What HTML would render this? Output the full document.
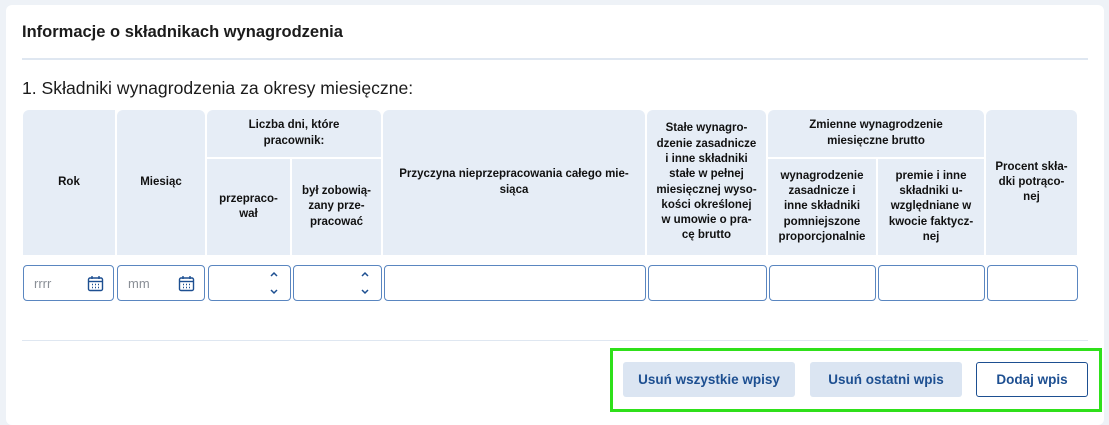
<!DOCTYPE html>
<html><head><meta charset="utf-8"><style>
*{box-sizing:border-box;margin:0;padding:0}
body{width:1109px;height:413px;background:#eef2f7;font-family:"Liberation Sans",sans-serif;position:relative;overflow:hidden;color:#1b1b1b}
.card{position:absolute;left:6px;top:5px;width:1098px;height:420px;background:#fff;border-radius:6px}
.a{position:absolute}
.h{position:absolute;background:#e6edf6;display:flex;align-items:center;justify-content:center;text-align:center;font-weight:bold;font-size:11.5px;line-height:15.3px;color:#111;padding:0 4px}
.in{position:absolute;top:265px;height:36px;border:1.5px solid #5a86c0;border-radius:4px;background:#fff}
.btn{position:absolute;top:362px;height:35px;border-radius:3px;display:flex;align-items:center;justify-content:center;font-weight:bold;font-size:13.5px;color:#1d4f91;background:#dbe5f2}
.ph{position:absolute;top:10px;left:10px;font-size:13px;color:#8a8f96}
</style></head><body>
<div class="card"></div>
<div class="a" style="left:22px;top:23px;font-size:16.5px;font-weight:bold;">Informacje o składnikach wynagrodzenia</div>
<div class="a" style="left:22px;top:58px;width:1066px;height:2px;background:#dfe7f1"></div>
<div class="a" style="left:22px;top:78px;font-size:17.6px;">1. Składniki wynagrodzenia za okresy miesięczne:</div>

<div class="h" style="left:23px;top:110px;width:92px;height:145px;border-top-left-radius:6px">Rok</div>
<div class="h" style="left:117px;top:110px;width:88px;height:145px;border-top-left-radius:6px;border-top-right-radius:6px">Miesiąc</div>
<div class="h" style="left:207px;top:110px;width:174px;height:47px;border-top-left-radius:6px;border-top-right-radius:6px">Liczba dni, które<br>pracownik:</div>
<div class="h" style="left:207px;top:159px;width:83px;height:96px">przepraco-<br>wał</div>
<div class="h" style="left:292px;top:159px;width:89px;height:96px">był zobowią-<br>zany prze-<br>pracować</div>
<div class="h" style="left:383px;top:110px;width:262px;height:145px;border-top-left-radius:6px;border-top-right-radius:6px">Przyczyna nieprzepracowania całego mie-<br>siąca</div>
<div class="h" style="left:647px;top:110px;width:119px;height:145px;border-top-left-radius:6px;border-top-right-radius:6px">Stałe wynagro-<br>dzenie zasadnicze<br>i inne składniki<br>stałe w pełnej<br>miesięcznej wyso-<br>kości określonej<br>w umowie o pra-<br>cę brutto</div>
<div class="h" style="left:768px;top:110px;width:216px;height:47px;border-top-left-radius:6px;border-top-right-radius:6px">Zmienne wynagrodzenie<br>miesięczne brutto</div>
<div class="h" style="left:768px;top:159px;width:108px;height:96px">wynagrodzenie<br>zasadnicze i<br>inne składniki<br>pomniejszone<br>proporcjonalnie</div>
<div class="h" style="left:878px;top:159px;width:106px;height:96px">premie i inne<br>składniki u-<br>względniane w<br>kwocie faktycz-<br>nej</div>
<div class="h" style="left:986px;top:110px;width:91px;height:145px;border-top-left-radius:6px;border-top-right-radius:6px">Procent skła-<br>dki potrąco-<br>nej</div>

<div class="in" style="left:23px;width:91px"><span class="ph">rrrr</span>
<svg class="a" style="left:63px;top:9px" width="17" height="17" viewBox="0 0 17 17" fill="none" stroke="#1d4f91" stroke-width="1.4"><rect x="1.5" y="3" width="14" height="12.5" rx="1.5"/><line x1="1.5" y1="6.5" x2="15.5" y2="6.5"/><line x1="5" y1="1" x2="5" y2="4"/><line x1="12" y1="1" x2="12" y2="4"/><path d="M5 9.5h1M8 9.5h1M11 9.5h1M5 12.5h1M8 12.5h1M11 12.5h1"/></svg></div>
<div class="in" style="left:117px;width:88px"><span class="ph">mm</span>
<svg class="a" style="left:60px;top:9px" width="17" height="17" viewBox="0 0 17 17" fill="none" stroke="#1d4f91" stroke-width="1.4"><rect x="1.5" y="3" width="14" height="12.5" rx="1.5"/><line x1="1.5" y1="6.5" x2="15.5" y2="6.5"/><line x1="5" y1="1" x2="5" y2="4"/><line x1="12" y1="1" x2="12" y2="4"/><path d="M5 9.5h1M8 9.5h1M11 9.5h1M5 12.5h1M8 12.5h1M11 12.5h1"/></svg></div>
<div class="in" style="left:208px;width:83px"><svg class="a" style="left:60px;top:3px" width="10" height="28" viewBox="0 0 10 28" fill="none" stroke="#1d4f91" stroke-width="1.5"><path d="M2 7l3-3 3 3M2 21l3 3 3-3"/></svg></div>
<div class="in" style="left:293px;width:89px"><svg class="a" style="left:66px;top:3px" width="10" height="28" viewBox="0 0 10 28" fill="none" stroke="#1d4f91" stroke-width="1.5"><path d="M2 7l3-3 3 3M2 21l3 3 3-3"/></svg></div>
<div class="in" style="left:384px;width:262px"></div>
<div class="in" style="left:648px;width:119px"></div>
<div class="in" style="left:769px;width:107px"></div>
<div class="in" style="left:878px;width:107px"></div>
<div class="in" style="left:987px;width:91px"></div>

<div class="a" style="left:22px;top:340px;width:1066px;height:1px;background:#dfe7f1"></div>
<div class="a" style="left:610px;top:348px;width:492px;height:64px;border:3px solid #2fe01a"></div>
<div class="btn" style="left:623px;width:172px">Usuń wszystkie wpisy</div>
<div class="btn" style="left:810px;width:152px">Usuń ostatni wpis</div>
<div class="btn" style="left:976px;width:112px;background:#fff;border:1.5px solid #1d4f91">Dodaj wpis</div>
</body></html>
